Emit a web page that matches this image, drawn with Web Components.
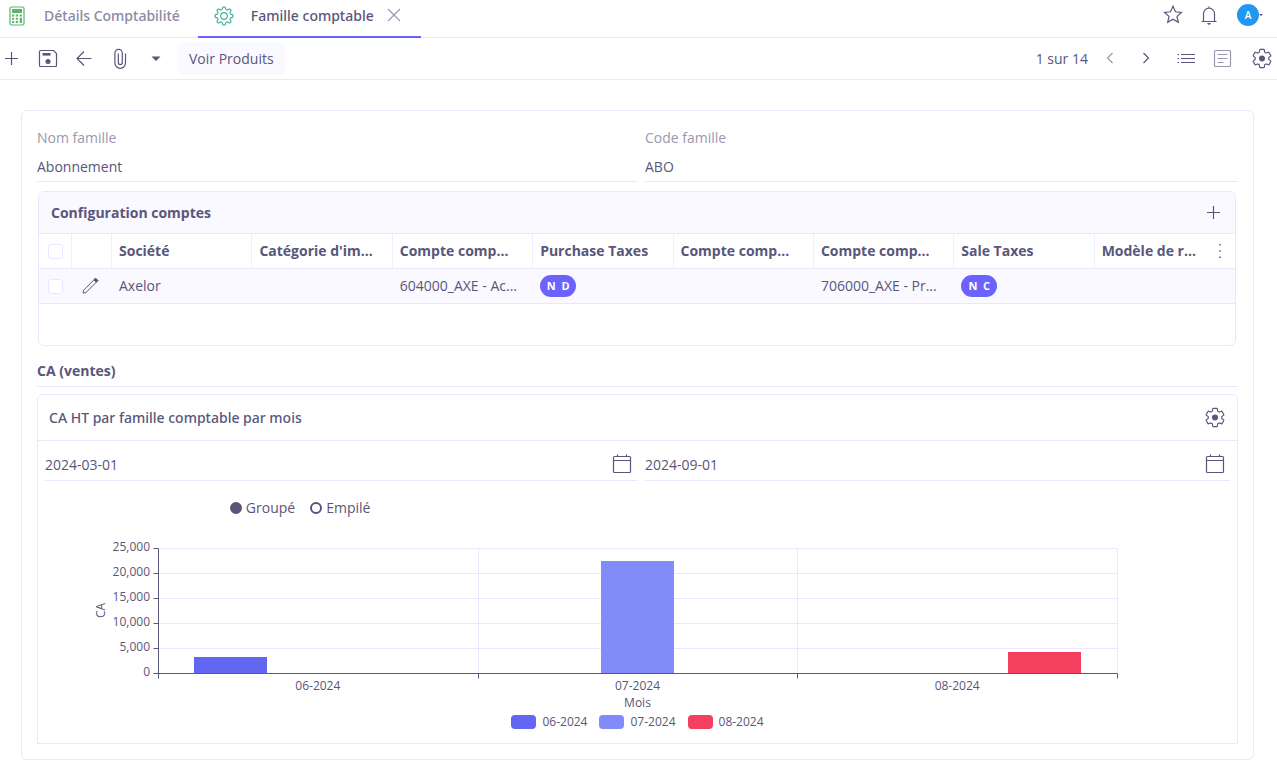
<!DOCTYPE html>
<html lang="fr">
<head>
<meta charset="utf-8">
<title>Famille comptable</title>
<style>
  :root {
    --text: #58567b;
    --muted: #9a98b0;
    --line: #e9e7fd;
    --soft: #faf9ff;
    --primary: #6c63ff;
    --title-font: "Noto Sans", "Open Sans", sans-serif;
  }
  * { box-sizing: border-box; }
  body {
    margin: 0;
    background: #fff;
    color: var(--text);
    font: 400 14px/20px "Open Sans", "Noto Sans", sans-serif;
  }
  main { padding: 30px 23px 8px 21px; }
</style>
</head>
<body>
<ax-tabs></ax-tabs>
<ax-toolbar></ax-toolbar>
<main>
  <ax-form>
    <ax-field label="Nom famille" value="Abonnement"></ax-field>
    <ax-field label="Code famille" value="ABO"></ax-field>
    <ax-accounts class="wide"></ax-accounts>
    <ax-section class="wide" heading="CA (ventes)">
      <ax-dashlet heading="CA HT par famille comptable par mois">
        <ax-date slot="filters" label="Du" value="2024-03-01"></ax-date>
        <ax-date slot="filters" label="Au" value="2024-09-01"></ax-date>
        <ax-chart></ax-chart>
      </ax-dashlet>
    </ax-section>
  </ax-form>
</main>

<script>
const gearPath = "M19.14 12.94c.04-.3.06-.61.06-.94 0-.32-.02-.64-.07-.94l2.03-1.58c.18-.14.23-.41.12-.61l-1.92-3.32c-.12-.22-.37-.29-.59-.22l-2.39.96c-.5-.38-1.03-.7-1.62-.94l-.36-2.54c-.04-.24-.24-.41-.48-.41h-3.84c-.24 0-.43.17-.47.41l-.36 2.54c-.59.24-1.13.57-1.62.94l-2.39-.96c-.22-.08-.47 0-.59.22L2.74 8.87c-.12.21-.08.47.12.61l2.03 1.58c-.05.3-.09.63-.09.94s.02.64.07.94l-2.03 1.58c-.18.14-.23.41-.12.61l1.92 3.32c.12.22.37.29.59.22l2.39-.96c.5.38 1.03.7 1.62.94l.36 2.54c.05.24.24.41.48.41h3.84c.24 0 .44-.17.47-.41l.36-2.54c.59-.24 1.13-.56 1.62-.94l2.39.96c.22.08.47 0 .59-.22l1.92-3.32c.12-.22.07-.47-.12-.61z";

/* Eight-lobed cog outline, traced in polar coordinates. */
function cogPath() {
  let d = "";
  for (let i = 0; i < 160; i++) {
    const a = (i / 160) * Math.PI * 2;
    const r = 7.9 + 1.1 * Math.tanh(2.5 * Math.cos(8 * a));
    d += (i ? "L" : "M") + (12 + r * Math.cos(a)).toFixed(2) + " " + (12 + r * Math.sin(a)).toFixed(2);
  }
  return d + "Z";
}

const ICONS = {
  plus: '<path d="M11.500 5v13M5 11.500h13"/>',
  save: '<path d="M4.500 3.500h13l3 3v12a1 1 0 0 1-1 1h-15a1 1 0 0 1-1-1v-14a1 1 0 0 1 1-1z"/><path d="M6.500 6h8v2.600h-8z" fill="currentColor" stroke="none"/><circle cx="12" cy="14.500" r="2.500" fill="currentColor" stroke="none"/>',
  back: '<path d="M19.500 11.500H5.500M12 4.500l-7 7 7 7"/>',
  clip: '<path d="M17.500 6.500v9.500a5.300 5.300 0 0 1-10.600 0V6a3.700 3.700 0 0 1 7.400 0v9.600a2 2 0 0 1-4 0V6.500"/>',
  caret: '<path d="M7.500 9.500h9L12 14z" fill="currentColor" stroke="none"/>',
  close: '<path d="M6 5l12 12M18 5L6 17"/>',
  star: '<path d="M12 3.300l2.500 5.500 6 .6-4.500 4 1.300 5.900L12 16.200l-5.300 3.100L8 13.400l-4.500-4 6-.6z"/>',
  bell: '<path d="M4.500 18.500h15M6.500 18.500v-7.800a5.500 5.500 0 0 1 11 0v7.800M12 5.200V3.500"/><path d="M10.200 20h3.600a1.800 1.800 0 0 1-3.600 0z" fill="currentColor" stroke="none"/>',
  prev: '<path d="M14.500 6l-5 5 5 5"/>',
  next: '<path d="M9.500 6l5 5-5 5"/>',
  list: '<path d="M7 7.500h14M7 11.500h14M7 15.500h14"/><path d="M3.500 7.500h1.500M3.500 11.500h1.500M3.500 15.500h1.500"/>',
  form: '<rect x="4.500" y="3.500" width="16" height="16" rx="1"/><path d="M7.500 7.500h10M7.500 11.500h10M7.500 15.500h6"/>',
  gear: `<path transform="translate(.6 .1) scale(.95)" d="${gearPath}"/><circle cx="12" cy="11.500" r="3" fill="currentColor" stroke="none"/>`,
  cog: `<path d="${cogPath()}"/><circle cx="12" cy="12" r="3.300"/>`,
  calc: '<rect x="5" y="3" width="14" height="18" rx="1.500"/><path d="M7 5h10v4H7zM7 10.500h2.200v2H7zM10.800 10.500h2.200v2h-2.200zM7 13.800h2.200v2H7zM10.800 13.800h2.200v2h-2.200zM7 17h2.200v2H7zM10.800 17h2.200v2h-2.200zM14.700 10.500H17v2h-2.300zM14.700 13.800H17V19h-2.300z" fill="currentColor" stroke="none"/>',
  pencil: '<path d="M2.500 20.500l.6-3.400L17 3.200l2.800 2.800L5.900 19.900z"/><path d="M15.500 4.700L17.600 2.600l2.800 2.800-2.100 2.100z" fill="currentColor"/>',
  calendar: '<rect x="3.500" y="3.500" width="17" height="16" rx="1"/><path d="M3.500 7.500h17M7.500 3.500V1.500M16.500 3.500V1.500"/>',
  dots: '<path d="M11.300 5h1.500v1.500h-1.500zM11.300 11.300h1.500v1.500h-1.500zM11.300 17.600h1.500v1.500h-1.500z" fill="currentColor" stroke="none"/>'
};

const RESET = `
  *, *::before, *::after { box-sizing: border-box; }
  button, input { margin: 0; padding: 0; border: 0; background: none; color: inherit; font: inherit; outline: 0; }
  button { cursor: pointer; display: flex; align-items: center; justify-content: center; }
`;

class Base extends HTMLElement {
  constructor() {
    super();
    this.attachShadow({ mode: "open" });
  }
  connectedCallback() {
    this.shadowRoot.innerHTML = `<style>${RESET}${this.css()}</style>${this.html()}`;
    this.ready?.();
  }
}

customElements.define("ax-icon", class extends Base {
  css() {
    return `:host { display: block; width: 24px; height: 24px; flex: none; }
      svg { display: block; width: 100%; height: 100%; }`;
  }
  html() {
    return `<svg viewBox="0 0 24 24" fill="none" stroke="currentColor" stroke-width="1.2" aria-hidden="true">${ICONS[this.getAttribute("name")]}</svg>`;
  }
});

customElements.define("ax-tabs", class extends Base {
  css() {
    return `
      :host { display: flex; justify-content: space-between; height: 38px; border-bottom: 1px solid var(--line); }
      nav { display: flex; font-family: var(--title-font); font-weight: 500; }
      a { color: #8a88a5; text-decoration: none; }
      .tab { display: flex; align-items: center; height: 38px; padding: 0 18px 4px 5px; gap: 15px; border-bottom: 2px solid transparent; }
      .current { padding: 0 15px 4px 14px; border-color: var(--primary); }
      .current a { color: var(--text); }
      .calc { color: #5cb56a; }
      .cog { color: #44b09e; }
      .title { display: flex; align-items: center; gap: 8px; }
      .close { color: var(--muted); }
      .user { display: flex; align-items: center; height: 30px; gap: 12px; padding-right: 17px; }
      .me { position: relative; width: 24px; margin-left: 3px; }
      .avatar { width: 22px; height: 22px; border-radius: 50%; background: #2196f3; color: #fff; font-size: 10px; font-weight: 600; line-height: 22px; text-align: center; }
      .me i { position: absolute; right: -3px; top: 10px; border: 2px solid transparent; border-top-color: var(--text); }
    `;
  }
  html() {
    return `
      <nav>
        <div class="tab"><ax-icon class="calc" name="calc"></ax-icon><a href="#details">Détails Comptabilité</a></div>
        <div class="tab current"><ax-icon class="cog" name="cog"></ax-icon>
          <div class="title"><a href="#famille" aria-current="page">Famille comptable</a>
          <button class="close" aria-label="Fermer"><ax-icon name="close"></ax-icon></button></div></div>
      </nav>
      <div class="user">
        <button aria-label="Favoris"><ax-icon name="star"></ax-icon></button>
        <button aria-label="Notifications"><ax-icon name="bell"></ax-icon></button>
        <button class="me" aria-label="Compte"><span class="avatar">A</span><i></i></button>
      </div>`;
  }
});

customElements.define("ax-toolbar", class extends Base {
  css() {
    return `
      :host { display: flex; justify-content: space-between; align-items: center; height: 42px; padding-right: 3px; border-bottom: 1px solid var(--line); }
      div { display: flex; align-items: center; gap: 12px; }
      .start, .end { gap: 10px; }
      .end { gap: 16px; }
      .pager { gap: 10px; }
      .action { height: 33px; padding: 0 11px; border-radius: 6px; background: var(--soft); }
      [disabled] { color: var(--muted); }
    `;
  }
  html() {
    const b = (icon, label, attr = "") => `<button aria-label="${label}" ${attr}><ax-icon name="${icon}"></ax-icon></button>`;
    return `
      <div class="start">
        <div>${b("plus", "Nouveau")}${b("save", "Enregistrer")}${b("back", "Retour")}${b("clip", "Pièces jointes")}${b("caret", "Plus")}</div>
        <button class="action">Voir Produits</button>
      </div>
      <div class="end">
        <div class="pager"><span>1 sur 14</span><div>${b("prev", "Précédent", "disabled")}${b("next", "Suivant")}</div></div>
        <div>${b("list", "Liste")}${b("form", "Formulaire", "disabled")}</div>
        ${b("gear", "Paramètres")}
      </div>`;
  }
});

customElements.define("ax-form", class extends Base {
  css() {
    return `
      :host { display: grid; grid-template-columns: minmax(0, 600fr) minmax(0, 593fr); column-gap: 8px; row-gap: 9px;
        padding: 15px; border: 1px solid var(--line); border-radius: 6px; }
      ::slotted(.wide) { grid-column: 1 / -1; }
    `;
  }
  html() { return `<slot></slot>`; }
});

customElements.define("ax-field", class extends Base {
  css() {
    return `
      :host { display: block; }
      label { display: block; height: 25px; line-height: 24px; color: var(--muted); }
      input { display: block; width: 100%; height: 31px; padding-top: 1px; border-bottom: 1px solid var(--line); }
    `;
  }
  html() {
    return `<label for="f">${this.getAttribute("label")}</label><input id="f" value="${this.getAttribute("value")}">`;
  }
});

customElements.define("ax-accounts", class extends Base {
  css() {
    return `
      :host { display: block; margin: 0 2px 0 1px; min-height: 155px; border: 1px solid var(--line); border-radius: 6px; overflow: hidden; }
      header { display: flex; align-items: center; justify-content: space-between; height: 42px; padding: 0 9px 0 12px;
        border-bottom: 1px solid var(--line); background: var(--soft); }
      h2 { margin: 0; font-size: 14px; font-weight: 700; }
      table { width: 100%; border-collapse: separate; border-spacing: 0; table-layout: fixed; }
      col.check { width: 33px; } col.edit { width: 40px; }
      th, td { height: 35px; padding: 0 7px; text-align: left; vertical-align: middle; white-space: nowrap; border-bottom: 1px solid var(--line); }
      th { font-weight: 700; border-right: 1px solid #f1effe; }
      th:last-child { border-right: 0; padding-right: 3px; }
      th.tick, td.tick, td.pen { padding: 0 9px; }
      td { background: var(--soft); }
      .last { display: flex; align-items: center; justify-content: space-between; }
      input { appearance: none; display: block; width: 15px; height: 15px; border: 1px solid var(--line); border-radius: 3px; background: #fff; }
      .pen ax-icon { width: 20px; height: 20px; }
      .tag { display: block; width: 36px; height: 22px; border-radius: 11px; background: var(--primary); color: #fff; font-size: 11px; font-weight: 700; line-height: 22px; text-align: center; }
    `;
  }
  html() {
    const heads = ["Société", "Catégorie d'im...", "Compte comp...", "Purchase Taxes", "Compte comp...", "Compte comp...", "Sale Taxes"];
    return `
      <header><h2>Configuration comptes</h2><button aria-label="Ajouter"><ax-icon name="plus"></ax-icon></button></header>
      <table>
        <colgroup><col class="check"><col class="edit"><col span="8"></colgroup>
        <thead><tr>
          <th class="tick"><input type="checkbox" aria-label="Tout sélectionner"></th><th></th>
          ${heads.map(h => `<th>${h}</th>`).join("")}
          <th><div class="last"><span>Modèle de r...</span><button aria-label="Colonnes"><ax-icon name="dots"></ax-icon></button></div></th>
        </tr></thead>
        <tbody><tr>
          <td class="tick"><input type="checkbox" aria-label="Sélectionner Axelor"></td>
          <td class="pen"><button aria-label="Modifier"><ax-icon name="pencil"></ax-icon></button></td>
          <td>Axelor</td><td></td><td>604000_AXE - Ac...</td><td><span class="tag">N&nbsp; D</span></td><td></td>
          <td>706000_AXE - Pr...</td><td><span class="tag">N&nbsp; C</span></td><td></td>
        </tr></tbody>
      </table>`;
  }
});

customElements.define("ax-section", class extends Base {
  css() {
    return `
      :host { display: block; }
      h2 { margin: 0 0 7px; height: 32px; font-size: 14px; font-weight: 700; line-height: 31px; border-bottom: 1px solid var(--line); }
    `;
  }
  html() { return `<h2>${this.getAttribute("heading")}</h2><slot></slot>`; }
});

customElements.define("ax-dashlet", class extends Base {
  css() {
    return `
      :host { display: block; border: 1px solid var(--line); border-radius: 6px 6px 0 0; }
      header { display: flex; align-items: center; justify-content: space-between; height: 46px; padding: 0 10px 0 11px; border-bottom: 1px solid var(--line); }
      h3 { margin: 0; font: 500 14px/20px var(--title-font); }
      .filters { display: grid; grid-template-columns: minmax(0, 592fr) minmax(0, 585fr); gap: 8px; padding: 8px 7px 0; }
    `;
  }
  html() {
    return `<header><h3>${this.getAttribute("heading")}</h3><button aria-label="Options"><ax-icon name="gear"></ax-icon></button></header>
      <div class="filters"><slot name="filters"></slot></div><slot></slot>`;
  }
});

customElements.define("ax-date", class extends Base {
  css() {
    return `
      :host { display: flex; align-items: center; height: 32px; padding-right: 3px; border-bottom: 1px solid var(--line); }
      input { flex: 1; min-width: 0; }
    `;
  }
  html() {
    return `<input type="text" aria-label="${this.getAttribute("label")}" value="${this.getAttribute("value")}">
      <button aria-label="Calendrier"><ax-icon name="calendar"></ax-icon></button>`;
  }
});

customElements.define("ax-chart", class extends Base {
  css() {
    return `
      :host { display: block; padding-bottom: 11px; }
      fieldset { display: flex; gap: 15px; margin: 0; padding: 17px 0 0 16%; border: 0; }
      label { display: flex; align-items: center; gap: 4px; }
      input { appearance: none; width: 12px; height: 12px; border: 2px solid var(--text); border-radius: 50%; }
      input:checked { background: var(--text); }
      svg { display: block; width: 100%; height: 194px; }
      text { fill: var(--text); font-size: 12px; }
      .grid { stroke: var(--line); }
      .axis { stroke: var(--text); }
      .legend { display: flex; justify-content: center; gap: 12px; }
      .legend button { gap: 6px; font-size: 12px; line-height: 20px; }
      .legend i { width: 25px; height: 14px; border-radius: 4px; }
    `;
  }
  html() {
    this.series = [["06-2024", 3200, "#6366f1"], ["07-2024", 22400, "#818cf8"], ["08-2024", 4200, "#f43f5e"]];
    return `
      <fieldset>
        <label><input type="radio" name="mode" checked>Groupé</label>
        <label><input type="radio" name="mode">Empilé</label>
      </fieldset>
      <svg role="img" aria-label="CA par mois"></svg>
      <div class="legend">${this.series.map(s => `<button><i style="background:${s[2]}"></i>${s[0]}</button>`).join("")}</div>`;
  }
  ready() {
    this.svg = this.shadowRoot.querySelector("svg");
    this.draw();
    new ResizeObserver(() => this.draw()).observe(this);
  }
  /* The plot takes 80% of the width; each month holds one slot per series. */
  draw() {
    const width = this.clientWidth, top = 30, bottom = 155;
    const left = Math.round(width * 0.1), right = width - left;
    const band = (right - left) / 3, bar = band * 0.228, side = (band - bar * 3.4) / 2;
    const line = (cls, x1, y1, x2, y2) => `<line class="${cls}" x1="${x1 + .5}" y1="${y1 + .5}" x2="${x2 + .5}" y2="${y2 + .5}"/>`;
    let out = "";
    for (let i = 0; i <= 5; i++) {
      const y = bottom - i * 25;
      if (i) out += line("grid", left, y, right, y);
      out += line("axis", left - 5, y, left, y);
      out += `<text x="${left - 8}" y="${y + 3}" text-anchor="end">${(i * 5000).toLocaleString("en-US")}</text>`;
    }
    for (let i = 0; i <= 3; i++) {
      const x = Math.round(left + i * band);
      if (i) out += line("grid", x, top, x, bottom);
      out += line("axis", x, bottom, x, bottom + 5);
    }
    this.series.forEach(([name, value, color], i) => {
      const x = Math.round(left + i * band + side + i * bar * 1.2);
      const h = Math.round(value / 200);
      out += `<rect x="${x}" y="${bottom - h}" width="${Math.round(bar)}" height="${h}" fill="${color}"/>`;
      out += `<text x="${left + band * (i + .5)}" y="172" text-anchor="middle">${name}</text>`;
    });
    out += line("axis", left, top, left, bottom) + line("axis", left, bottom, right, bottom);
    out += `<text x="${width / 2}" y="189" text-anchor="middle">Mois</text>`;
    out += `<text transform="translate(${left - 53} ${(top + bottom) / 2}) rotate(-90)" text-anchor="middle">CA</text>`;
    this.svg.innerHTML = out;
  }
});
</script>
</body>
</html>
